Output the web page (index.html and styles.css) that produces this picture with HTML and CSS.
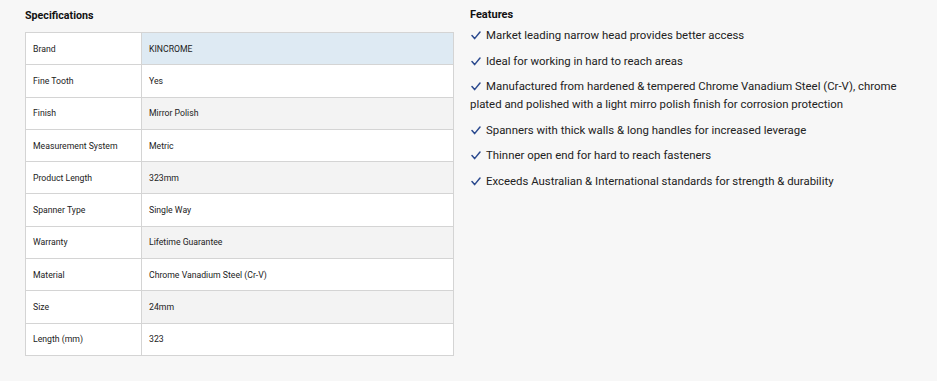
FILE: index.html
```html
<!DOCTYPE html>
<html>
<head>
<meta charset="utf-8">
<link rel="stylesheet" href="styles.css">
</head>
<body>
<div class="page">
  <section class="specs">
    <h3 class="title">Specifications</h3>
    <table class="spec-table">
      <tr class="hl"><td>Brand</td><td>KINCROME</td></tr>
      <tr><td>Fine Tooth</td><td>Yes</td></tr>
      <tr class="alt"><td>Finish</td><td>Mirror Polish</td></tr>
      <tr><td>Measurement System</td><td>Metric</td></tr>
      <tr class="alt"><td>Product Length</td><td>323mm</td></tr>
      <tr><td>Spanner Type</td><td>Single Way</td></tr>
      <tr class="alt"><td>Warranty</td><td>Lifetime Guarantee</td></tr>
      <tr><td>Material</td><td>Chrome Vanadium Steel (Cr-V)</td></tr>
      <tr class="alt"><td>Size</td><td>24mm</td></tr>
      <tr><td>Length (mm)</td><td>323</td></tr>
    </table>
  </section>
  <section class="features">
    <h3 class="title">Features</h3>
    <ul class="feat-list">
      <li><svg class="tick" viewBox="0 0 10 9" width="10" height="9"><path d="M1 4.6 L3.6 7.6 L9 1"/></svg>Market leading narrow head provides better access</li>
      <li><svg class="tick" viewBox="0 0 10 9" width="10" height="9"><path d="M1 4.6 L3.6 7.6 L9 1"/></svg>Ideal for working in hard to reach areas</li>
      <li><svg class="tick" viewBox="0 0 10 9" width="10" height="9"><path d="M1 4.6 L3.6 7.6 L9 1"/></svg>Manufactured from hardened &amp; tempered Chrome Vanadium Steel (Cr-V), chrome plated and polished with a light mirro polish finish for corrosion protection</li>
      <li><svg class="tick" viewBox="0 0 10 9" width="10" height="9"><path d="M1 4.6 L3.6 7.6 L9 1"/></svg>Spanners with thick walls &amp; long handles for increased leverage</li>
      <li><svg class="tick" viewBox="0 0 10 9" width="10" height="9"><path d="M1 4.6 L3.6 7.6 L9 1"/></svg>Thinner open end for hard to reach fasteners</li>
      <li><svg class="tick" viewBox="0 0 10 9" width="10" height="9"><path d="M1 4.6 L3.6 7.6 L9 1"/></svg>Exceeds Australian &amp; International standards for strength &amp; durability</li>
    </ul>
  </section>
</div>
</body>
</html>
```
FILE: styles.css
```css
html, body {
  margin: 0;
  padding: 0;
  background: #f7f7f7;
  font-family: Roboto, "Liberation Sans", sans-serif;
  color: #222;
}
.page {
  display: flex;
  gap: 16px;
  padding: 8px 0 0 25px;
}
.specs {
  width: 429px;
}
.title {
  margin: 0;
  font-size: 10.7px;
  font-weight: 700;
  color: #111;
  line-height: 16px;
}
.specs .title {
  margin-bottom: 8px;
}
.spec-table {
  width: 429px;
  border-collapse: collapse;
  background: #fff;
  font-size: 8.7px;
  color: #222;
}
.spec-table td {
  border: 1px solid #d4d4d4;
  height: 32.3px;
  padding: 0 0 0 7px;
  box-sizing: border-box;
}
.spec-table td:first-child {
  width: 116px;
  background: #fff;
}
.spec-table tr.alt td:last-child {
  background: #f3f3f3;
}
.spec-table tr.hl td:last-child {
  background: #deeaf3;
}
.features {
  width: 440px;
}
.features .title {
  font-size: 11px;
  line-height: 14px;
  margin-top: 0;
}
.feat-list {
  list-style: none;
  margin: 4px 0 0;
  padding: 0;
  font-size: 11.4px;
  line-height: 18px;
  color: #222;
}
.feat-list li {
  margin-bottom: 7.6px;
}
.tick {
  display: inline-block;
  vertical-align: -1px;
  margin: 0 5px 0 1px;
  fill: none;
  stroke: #2b4a8f;
  stroke-width: 1.5;
  stroke-linecap: round;
  stroke-linejoin: round;
}
```
